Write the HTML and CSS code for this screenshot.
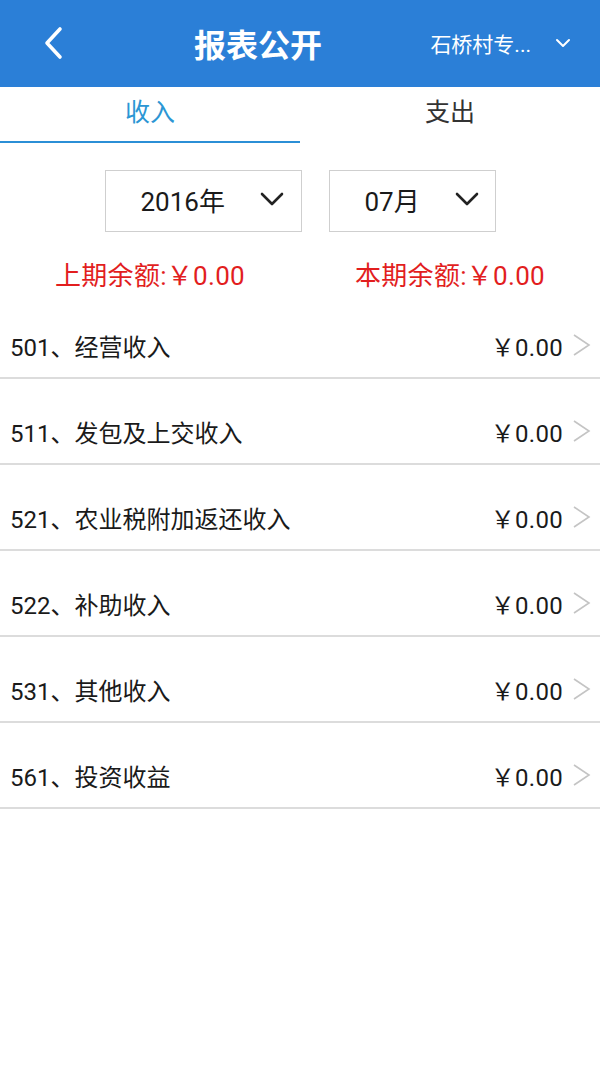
FILE: index.html
```html
<!DOCTYPE html>
<html lang="zh">
<head>
<meta charset="utf-8">
<link rel="stylesheet" href="styles.css">
</head>
<body>
<header class="topbar">
  <div class="back">
    <svg width="22" height="34" viewBox="0 0 22 34"><path d="M18 3 L5 17 L18 31" fill="none" stroke="#fff" stroke-width="3.6" stroke-linecap="round" stroke-linejoin="round"/></svg>
  </div>
  <div class="title">报表公开</div>
  <div class="village">
    <span class="vname">石桥村专...</span>
    <svg width="16" height="10" viewBox="0 0 16 10"><path d="M2 2 L8 8 L14 2" fill="none" stroke="#fff" stroke-width="2" stroke-linecap="round" stroke-linejoin="round"/></svg>
  </div>
</header>
<nav class="tabs">
  <div class="tab active">收入</div>
  <div class="tab">支出</div>
</nav>
<section class="pickers">
  <div class="picker year"><span>2016年</span>
    <svg width="24" height="14" viewBox="0 0 24 14"><path d="M2 2 L12 12 L22 2" fill="none" stroke="#222" stroke-width="2.6" stroke-linecap="round" stroke-linejoin="round"/></svg>
  </div>
  <div class="picker month"><span>07月</span>
    <svg width="24" height="14" viewBox="0 0 24 14"><path d="M2 2 L12 12 L22 2" fill="none" stroke="#222" stroke-width="2.6" stroke-linecap="round" stroke-linejoin="round"/></svg>
  </div>
</section>
<section class="balances">
  <div class="bal">上期余额:￥0.00</div>
  <div class="bal">本期余额:￥0.00</div>
</section>
<ul class="list">
  <li class="row"><span class="name">501、经营收入</span><span class="amt">￥0.00</span><span class="arrow"><svg width="20" height="24" viewBox="0 0 20 24"><path d="M3 2 L18 12 L3 22" fill="none" stroke="#c4c4c4" stroke-width="1.6"/></svg></span></li>
  <li class="row"><span class="name">511、发包及上交收入</span><span class="amt">￥0.00</span><span class="arrow"><svg width="20" height="24" viewBox="0 0 20 24"><path d="M3 2 L18 12 L3 22" fill="none" stroke="#c4c4c4" stroke-width="1.6"/></svg></span></li>
  <li class="row"><span class="name">521、农业税附加返还收入</span><span class="amt">￥0.00</span><span class="arrow"><svg width="20" height="24" viewBox="0 0 20 24"><path d="M3 2 L18 12 L3 22" fill="none" stroke="#c4c4c4" stroke-width="1.6"/></svg></span></li>
  <li class="row"><span class="name">522、补助收入</span><span class="amt">￥0.00</span><span class="arrow"><svg width="20" height="24" viewBox="0 0 20 24"><path d="M3 2 L18 12 L3 22" fill="none" stroke="#c4c4c4" stroke-width="1.6"/></svg></span></li>
  <li class="row"><span class="name">531、其他收入</span><span class="amt">￥0.00</span><span class="arrow"><svg width="20" height="24" viewBox="0 0 20 24"><path d="M3 2 L18 12 L3 22" fill="none" stroke="#c4c4c4" stroke-width="1.6"/></svg></span></li>
  <li class="row"><span class="name">561、投资收益</span><span class="amt">￥0.00</span><span class="arrow"><svg width="20" height="24" viewBox="0 0 20 24"><path d="M3 2 L18 12 L3 22" fill="none" stroke="#c4c4c4" stroke-width="1.6"/></svg></span></li>
</ul>
</body>
</html>
```

FILE: styles.css
```css
* { box-sizing: border-box; }
html, body { margin: 0; padding: 0; background: #fff; }
body {
  width: 600px;
  font-family: Roboto, "Noto Sans CJK SC", sans-serif;
  color: #222;
}
.topbar {
  height: 87px;
  background: #2b7fd7;
  display: flex;
  align-items: center;
  color: #fff;
}
.back {
  width: 150px;
  padding-left: 42px;
  display: flex;
  align-items: center;
  margin-top: -2px;
}
.title {
  flex: 1;
  font-size: 32px;
  font-weight: 700;
  padding-left: 44px;
  margin-top: -2px;
}
.village {
  display: flex;
  align-items: center;
  padding-right: 29px;
  font-size: 21px;
  margin-top: -2px;
}
.vname { margin-right: 24px; }
.tabs {
  display: flex;
  height: 56px;
}
.tab {
  flex: 1;
  display: flex;
  align-items: center;
  justify-content: center;
  font-size: 25px;
  color: #333;
  border-bottom: 2px solid transparent;
  padding-bottom: 8px;
}
.tab.active {
  color: #2b96d4;
  border-bottom-color: #2b8fd6;
}
.pickers {
  display: flex;
  justify-content: center;
  gap: 27px;
  padding-top: 27px;
}
.picker {
  height: 62px;
  border: 1px solid #cfcfcf;
  display: flex;
  align-items: center;
  font-size: 26px;
  color: #1a1a1a;
  padding-bottom: 4px;
}
.picker.year { width: 197px; padding-left: 35px; }
.picker.month { width: 167px; padding-left: 35px; }
.picker.year span { margin-right: 35px; }
.picker.month span { margin-right: 35px; }
.balances {
  display: flex;
  height: 61px;
  align-items: center;
  padding-top: 22px;
}
.bal {
  flex: 1;
  text-align: center;
  color: #e21e1e;
  font-size: 26px;
  letter-spacing: 0.3px;
}
.list {
  list-style: none;
  margin: 0;
  padding: 0;
}
.row {
  height: 86px;
  display: flex;
  align-items: center;
  border-bottom: 2px solid #dcdcdc;
  padding-top: 20px;
  padding-left: 10px;
  padding-right: 9px;
  font-size: 24px;
  color: #1a1a1a;
}
.name { flex: 1; }
.amt { margin-right: 8px; letter-spacing: 0.3px; }
.arrow { display: flex; align-items: center; }
```
